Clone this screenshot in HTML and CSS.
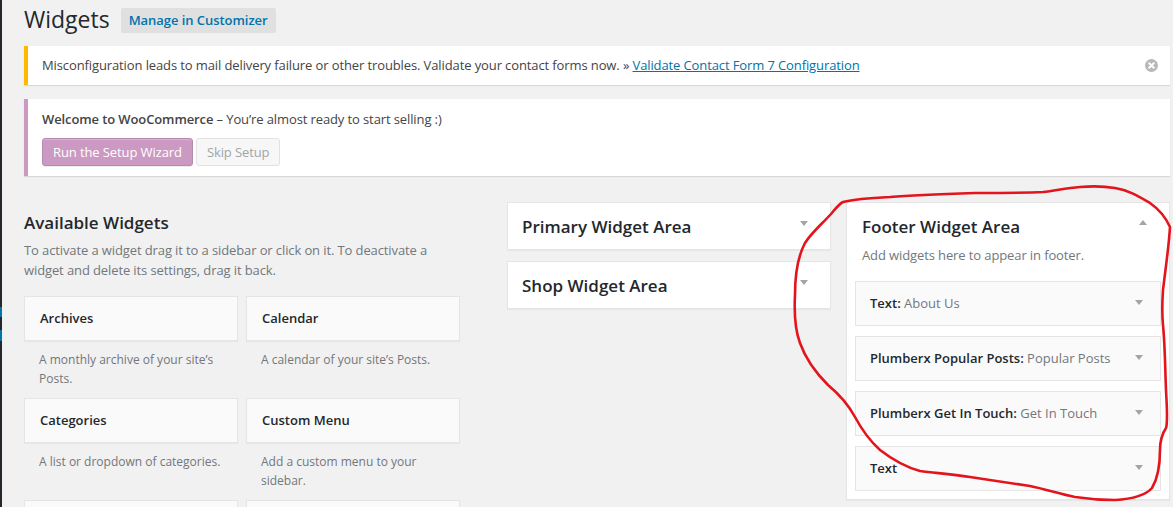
FILE: index.html
```html
<!DOCTYPE html>
<html lang="en">
<head>
<meta charset="utf-8">
<title>Widgets</title>
<link rel="stylesheet" href="styles.css">
</head>
<body>
<div class="page">
  <div class="adminmenu">
    <span class="am-gap"></span>
    <span class="am-blue"></span>
    <span class="am-dark"></span>
    <span class="am-blue am-blue-2"></span>
  </div>
  <div class="main">
    <div class="head">
      <h1 class="page-title">Widgets</h1>
      <a class="title-action">Manage in Customizer</a>
    </div>

    <div class="notice notice-warn">
      <p class="notice-text">Misconfiguration leads to mail delivery failure or other troubles. Validate your contact forms now. » <a class="notice-link">Validate Contact Form 7 Configuration</a></p>
      <span class="dismiss">
        <svg width="13" height="13" viewBox="0 0 13 13"><circle cx="6.5" cy="6.5" r="6.5" fill="#b4b9be"/><path d="M4.2 4.2 L8.8 8.8 M8.8 4.2 L4.2 8.8" stroke="#fff" stroke-width="2" stroke-linecap="round"/></svg>
      </span>
    </div>

    <div class="notice notice-woo">
      <p class="notice-text"><strong class="strong">Welcome to WooCommerce</strong> – You’re almost ready to start selling :)</p>
      <div class="actions">
        <a class="btn btn-woo">Run the Setup Wizard</a>
        <a class="btn btn-skip">Skip Setup</a>
      </div>
    </div>

    <div class="widgets">
      <div class="available">
        <h2 class="available-title">Available Widgets</h2>
        <p class="available-desc">To activate a widget drag it to a sidebar or click on it. To deactivate a widget and delete its settings, drag it back.</p>
        <div class="widget-grid">
          <div class="avail-item">
            <div class="avail-box">Archives</div>
            <p class="avail-desc">A monthly archive of your site’s Posts.</p>
          </div>
          <div class="avail-item">
            <div class="avail-box">Calendar</div>
            <p class="avail-desc">A calendar of your site’s Posts.</p>
          </div>
          <div class="avail-item">
            <div class="avail-box">Categories</div>
            <p class="avail-desc">A list or dropdown of categories.</p>
          </div>
          <div class="avail-item">
            <div class="avail-box">Custom Menu</div>
            <p class="avail-desc">Add a custom menu to your sidebar.</p>
          </div>
          <div class="avail-item">
            <div class="avail-box"></div>
          </div>
          <div class="avail-item">
            <div class="avail-box"></div>
          </div>
        </div>
      </div>

      <div class="sidebar-col">
        <div class="sidebar-box">
          <div class="sidebar-head">
            <h2 class="sidebar-title">Primary Widget Area</h2>
            <span class="arrow-down"></span>
          </div>
        </div>
        <div class="sidebar-box">
          <div class="sidebar-head">
            <h2 class="sidebar-title">Shop Widget Area</h2>
            <span class="arrow-down"></span>
          </div>
        </div>
      </div>

      <div class="sidebar-col">
        <div class="sidebar-box sidebar-open">
          <div class="sidebar-head open-head">
            <h2 class="sidebar-title">Footer Widget Area</h2>
            <span class="arrow-up"></span>
          </div>
          <p class="sidebar-desc">Add widgets here to appear in footer.</p>
          <div class="placed">
            <div class="placed-item"><span class="placed-title">Text:<span class="placed-sub"> About Us</span></span><span class="arrow-down small"></span></div>
            <div class="placed-item"><span class="placed-title">Plumberx Popular Posts:<span class="placed-sub"> Popular Posts</span></span><span class="arrow-down small"></span></div>
            <div class="placed-item"><span class="placed-title">Plumberx Get In Touch:<span class="placed-sub"> Get In Touch</span></span><span class="arrow-down small"></span></div>
            <div class="placed-item"><span class="placed-title">Text</span><span class="arrow-down small"></span></div>
          </div>
        </div>
      </div>
    </div>
  </div>
</div>

<svg class="annotation" width="1173" height="507" viewBox="0 0 1173 507">
  <path fill="none" stroke="#e3141c" stroke-width="2.6" stroke-linejoin="round" stroke-linecap="round"
    d="M843,202 C855,199 870,198 890,197 C915,195 945,194 975,193 C1000,193 1025,193 1043,192 C1055,191 1065,188 1080,187 C1092,186 1103,186 1115,188 C1128,190 1138,196 1150,203 C1160,210 1166,218 1170,227 C1169,245 1166,265 1163,290 C1162,305 1162,315 1163,325 C1165,345 1165,365 1166,390 C1167,410 1168,422 1166,428 C1162,434 1160,440 1160,450 C1160,465 1158,478 1152,488 C1145,496 1132,499 1115,500 C1100,500 1088,499 1075,497 C1060,494 1045,489 1030,486 C1010,483 990,480 970,477 C950,474 935,473 920,471 C905,467 893,460 880,450 C870,441 862,430 855,417 C848,404 840,395 828,385 C816,373 806,360 800,343 C795,330 794,315 795,295 C795,275 797,258 805,243 C812,232 822,224 831,214 C836,208 839,204 843,202"/>
</svg>
</body>
</html>
```

FILE: styles.css
```css
* { box-sizing: border-box; }

html, body {
  margin: 0;
  padding: 0;
  background: #f1f1f1;
  overflow: hidden;
}

body {
  font-family: "Open Sans", "Noto Sans", sans-serif;
  font-size: 13px;
  line-height: 1.4;
  color: #444;
  position: relative;
}

.page {
  display: flex;
  min-height: 100vh;
}

/* admin menu edge */
.adminmenu {
  width: 2px;
  flex: none;
  background: #23282d;
  display: flex;
  flex-direction: column;
}
.am-gap { height: 307px; }
.am-blue { height: 10px; background: #0073aa; }
.am-dark { height: 13px; }
.am-blue-2 { height: 11px; }

.main {
  flex: 1;
  padding: 0 3px 0 22px;
}

/* header */
.head {
  display: flex;
  align-items: center;
  padding-top: 5px;
  height: 34px;
}
.page-title {
  margin: 0;
  font-size: 23px;
  font-weight: 400;
  line-height: 29px;
  color: #23282d;
}
.title-action {
  margin-left: 11px;
  background: #e0e0e0;
  color: #0073aa;
  font-size: 13px;
  font-weight: 600;
  line-height: 17px;
  padding: 4px 8px;
  border-radius: 2px;
  margin-top: 1px;
  letter-spacing: -0.05px;
}

/* notices */
.notice {
  background: #fff;
  border-left: 4px solid #ffb900;
  box-shadow: 0 1px 1px 0 rgba(0, 0, 0, 0.1);
  padding: 10px 12px 10px 14px;
}
.notice-warn {
  margin-top: 12px;
  display: flex;
  align-items: center;
}
.notice-text {
  margin: 0;
  line-height: 19px;
  flex: 1;
  letter-spacing: -0.11px;
}
.notice-link {
  color: #0073aa;
  text-decoration: underline;
}
.dismiss {
  display: flex;
  width: 13px;
  height: 13px;
}

.notice-woo {
  margin-top: 14px;
  border-left-color: #cc99c2;
  padding-top: 11px;
}
.strong { font-weight: 600; }
.actions {
  display: flex;
  gap: 3px;
  margin-top: 9px;
}
.btn {
  display: block;
  height: 28px;
  line-height: 26px;
  padding: 0 10px;
  border-radius: 3px;
  font-size: 13px;
  letter-spacing: -0.1px;
}
.btn-woo {
  background: #cc99c2;
  border: 1px solid #b78aaf;
  color: #fff;
  box-shadow: inset 0 1px 0 rgba(255, 255, 255, 0.25), 0 1px 0 rgba(0, 0, 0, 0.08);
}
.btn-skip {
  background: #f7f7f7;
  border: 1px solid #e2e2e2;
  color: #a0a5aa;
}

/* widgets area */
.widgets {
  display: flex;
  align-items: flex-start;
  margin-top: 26px;
}

.available {
  width: 436px;
  flex: none;
  margin-right: 47px;
  padding-top: 9px;
}
.available-title {
  margin: 0;
  font-size: 17px;
  font-weight: 600;
  line-height: 24px;
  color: #23282d;
}
.available-desc {
  margin: 5px 0 0;
  line-height: 20px;
  color: #72777c;
  letter-spacing: -0.11px;
}
.widget-grid {
  display: grid;
  grid-template-columns: 1fr 1fr;
  column-gap: 8px;
  margin-top: 16px;
}
.avail-box {
  height: 45px;
  background: #fafafa;
  border: 1px solid #e5e5e5;
  box-shadow: 0 1px 1px rgba(0, 0, 0, 0.04);
  padding: 0 15px;
  display: flex;
  align-items: center;
  font-weight: 600;
  color: #23282d;
}
.avail-desc {
  margin: 0;
  padding: 9px 15px 10px;
  font-size: 12px;
  line-height: 19px;
  color: #72777c;
}

.sidebar-col {
  width: 324px;
  flex: none;
  display: flex;
  flex-direction: column;
  gap: 11px;
}
.sidebar-col + .sidebar-col {
  margin-left: 15px;
}
.sidebar-box {
  background: #fff;
  border: 1px solid #e5e5e5;
  box-shadow: 0 1px 1px rgba(0, 0, 0, 0.04);
}
.sidebar-head {
  display: flex;
  justify-content: space-between;
  align-items: flex-start;
  padding: 12px 22px 10px 14px;
}
.sidebar-title {
  margin: 0;
  font-size: 17px;
  font-weight: 600;
  line-height: 24px;
  color: #23282d;
}
.arrow-down {
  width: 0;
  height: 0;
  border-left: 4.5px solid transparent;
  border-right: 4.5px solid transparent;
  border-top: 5px solid #a0a5aa;
  margin-top: 6px;
}
.arrow-up {
  width: 0;
  height: 0;
  border-left: 4.5px solid transparent;
  border-right: 4.5px solid transparent;
  border-bottom: 5px solid #a0a5aa;
  margin-top: 5px;
}

.sidebar-open {
  padding: 0 8px 8px;
}
.open-head {
  padding: 12px 14px 0 7px;
}
.sidebar-desc {
  margin: 6px 0 0;
  padding: 0 7px;
  line-height: 20px;
  color: #72777c;
  letter-spacing: -0.11px;
}
.placed {
  margin-top: 16px;
  display: flex;
  flex-direction: column;
  gap: 10px;
}
.placed-item {
  height: 45px;
  background: #fafafa;
  border: 1px solid #e5e5e5;
  display: flex;
  align-items: center;
  justify-content: space-between;
  padding: 0 17px 0 14px;
}
.placed-title {
  font-weight: 600;
  color: #23282d;
}
.placed-sub {
  font-weight: 400;
  color: #72777c;
}
.arrow-down.small {
  margin-top: -3px;
}

/* hand-drawn annotation overlay */
.annotation {
  position: absolute;
  left: 0;
  top: 0;
  pointer-events: none;
}
```
